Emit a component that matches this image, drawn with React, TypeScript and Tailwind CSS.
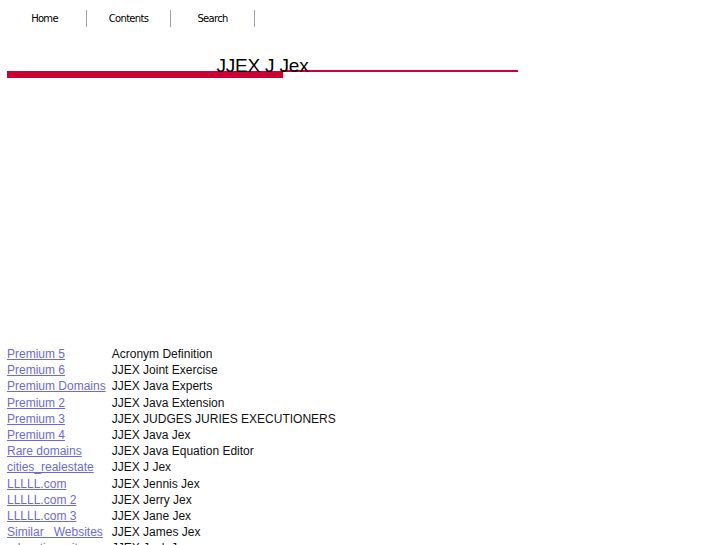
const rows: [string, string][] = [
  ['Premium 5', 'Acronym Definition'],
  ['Premium 6', 'JJEX Joint Exercise'],
  ['Premium Domains', 'JJEX Java Experts'],
  ['Premium 2', 'JJEX Java Extension'],
  ['Premium 3', 'JJEX JUDGES JURIES EXECUTIONERS'],
  ['Premium 4', 'JJEX Java Jex'],
  ['Rare domains', 'JJEX Java Equation Editor'],
  ['cities_realestate', 'JJEX J Jex'],
  ['LLLLL.com', 'JJEX Jennis Jex'],
  ['LLLLL.com 2', 'JJEX Jerry Jex'],
  ['LLLLL.com 3', 'JJEX Jane Jex'],
  ['Similar\u00a0\u00a0\u00a0Websites', 'JJEX James Jex'],
  ['education_sites', 'JJEX Jack Jex'],
]

const nav = ['Home', 'Contents', 'Search']

export default function App() {
  return (
    <div className="w-[727px] h-[545px] overflow-hidden bg-white font-['Liberation_Sans',Arial,sans-serif] text-black">
      <div className="flex pl-[3px] pt-[10px]">
        {nav.map((n) => (
          <div
            key={n}
            className="w-[84px] h-[17px] border-r border-gray-400 flex items-center justify-center text-[10px] font-['DejaVu_Sans',sans-serif] tracking-[-0.7px]"
          >
            {n}
          </div>
        ))}
      </div>

      <div className="relative ml-[7px] mt-[44px] w-[511px] flex items-start">
        <div className="w-[276px] h-[7px] bg-[#cc0033]" />
        <div className="flex-1 h-[2px] -mt-px bg-[#cc0033]" />
        <div className="absolute left-0 right-0 -top-[16px] text-center text-[19px] leading-[22px] tracking-[-0.2px]">
          JJEX J Jex
        </div>
      </div>

      <table className="ml-[7px] mt-[268px] border-collapse text-[12px]">
        <tbody>
          {rows.map(([a, b]) => (
            <tr key={a} className="h-[16.2px] leading-[16px]">
              <td className="p-0 pr-[6px] whitespace-nowrap">
                <a href="#" className="text-[#6b6bd6] underline">
                  {a}
                </a>
              </td>
              <td className="p-0 whitespace-nowrap text-[#111]">{b}</td>
            </tr>
          ))}
        </tbody>
      </table>
    </div>
  )
}
